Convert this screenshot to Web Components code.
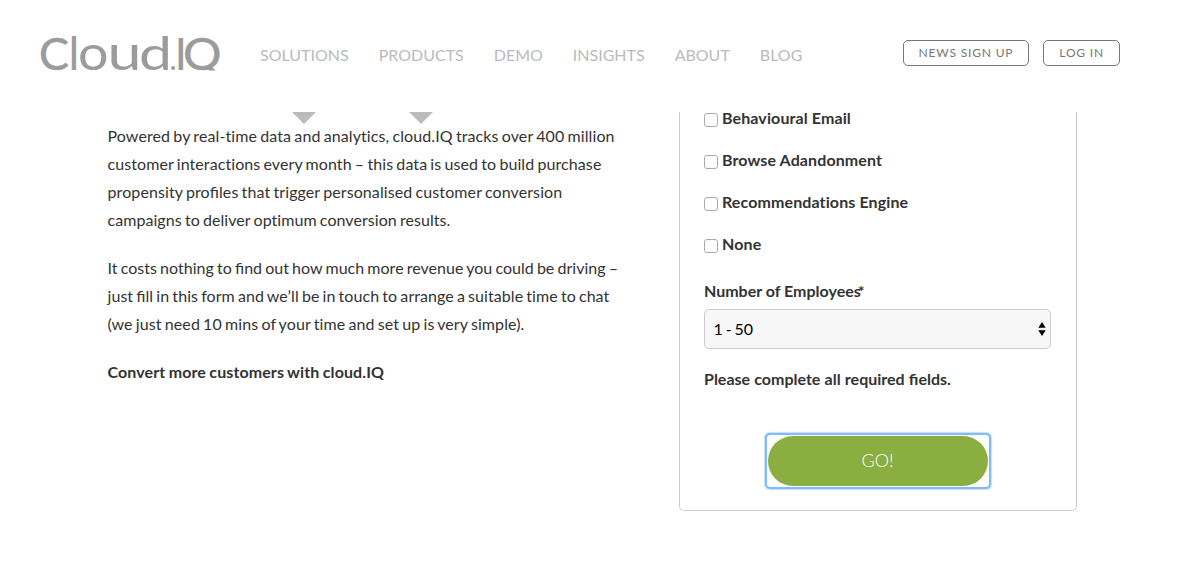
<!DOCTYPE html>
<html lang="en">
<head>
<meta charset="utf-8">
<title>cloud.IQ</title>
<style>
html,body{margin:0;height:100%;overflow:hidden;background:#fff}
body{font:16px/28px Lato,"Open Sans",sans-serif;color:#333}
</style>
</head>
<body>
<ciq-page>
  <ciq-header slot="header">
    <ciq-nav-item menu>SOLUTIONS</ciq-nav-item>
    <ciq-nav-item menu>PRODUCTS</ciq-nav-item>
    <ciq-nav-item>DEMO</ciq-nav-item>
    <ciq-nav-item>INSIGHTS</ciq-nav-item>
    <ciq-nav-item>ABOUT</ciq-nav-item>
    <ciq-nav-item>BLOG</ciq-nav-item>
    <ciq-pill slot="actions">NEWS SIGN UP</ciq-pill>
    <ciq-pill slot="actions">LOG IN</ciq-pill>
  </ciq-header>
  <ciq-copy></ciq-copy>
  <ciq-form>
    <ciq-check>Behavioural Email</ciq-check>
    <ciq-check>Browse Adandonment</ciq-check>
    <ciq-check>Recommendations Engine</ciq-check>
    <ciq-check>None</ciq-check>
    <ciq-select slot="fields" label="Number of Employees">1 - 50</ciq-select>
    <ciq-submit slot="submit">GO!</ciq-submit>
  </ciq-form>
</ciq-page>
<script>
function define(name, html) {
  customElements.define(name, class extends HTMLElement {
    constructor() {
      super();
      this.attachShadow({mode: 'open'}).innerHTML = html;
    }
    connectedCallback() {
      const label = this.shadowRoot.querySelector('[data-label]');
      if (label) label.textContent = this.getAttribute('label');
    }
  });
}

define('ciq-page', `<style>
:host{display:block;width:1200px;height:570px;overflow:hidden}
main{display:flex;align-items:flex-start;padding-left:107.5px}
</style><slot name="header"></slot><main><slot></slot></main>`);

define('ciq-logo', `<style>:host{display:block;width:182px;height:40px;flex:none}svg{display:block;overflow:visible;clip-path:inset(-10px -10px 2.5px -10px)}
text{font-family:Lato,sans-serif;fill:#9b9b9b}
.thick{stroke:#9b9b9b;stroke-width:.5px}</style>
<svg width="182" height="40" viewBox="0 0 182 40" role="img" aria-label="Cloud.IQ"><text y="36.5"><tspan class="thick"
x="-1" font-size="44" textLength="30" lengthAdjust="spacingAndGlyphs">C</tspan><tspan
x="28.6" font-size="46">l</tspan><tspan
x="38" font-size="48" textLength="30.5" lengthAdjust="spacingAndGlyphs">o</tspan><tspan
x="67.5" font-size="49" textLength="34" lengthAdjust="spacingAndGlyphs">u</tspan><tspan
x="99" font-size="47" textLength="33" lengthAdjust="spacingAndGlyphs">d</tspan><tspan
x="129.5" font-size="30">.</tspan><tspan
x="134.5" font-size="45">I</tspan><tspan class="thick"
x="143" font-size="44" textLength="38.5" lengthAdjust="spacingAndGlyphs">Q</tspan></text></svg>`);

define('ciq-header', `<style>
:host{display:flex;height:112px;box-sizing:border-box;padding:0 80px 0 40px;align-items:flex-start;background:#fff}
ciq-logo{margin-top:33px}
nav{display:flex;gap:30px;margin:41px 0 0 38px}
.actions{display:flex;gap:14px;margin:40px 0 0 auto}
</style><ciq-logo></ciq-logo><nav><slot></slot></nav><div class="actions"><slot name="actions"></slot></div>`);

define('ciq-nav-item', `<style>
:host{display:block;position:relative;color:#bbb;white-space:nowrap}
i{display:none}
:host([menu]) i{display:block;position:absolute;top:71px;left:calc(50% - 12px);border:12px solid transparent;border-top-color:#bbb;border-bottom:0}
</style><slot></slot><i></i>`);

define('ciq-pill', `<style>
:host{display:block;box-sizing:border-box;height:26px;border:1px solid #777;border-radius:5px;padding:0 15px;font-size:12px;line-height:24px;letter-spacing:.82px;color:#777;white-space:nowrap}
</style><slot></slot>`);

define('ciq-copy', `<style>
:host{display:block;width:571.5px;padding-top:10px;font-variant-ligatures:none}
p{margin:0 0 20px;word-spacing:-1px}
p>span{display:block;white-space:nowrap;letter-spacing:var(--t)}
.fi{font-variant-ligatures:normal;letter-spacing:0}
b{word-spacing:-.6px;letter-spacing:.1px}
</style>
<p><span style="--t:.1px">Powered by real-time data and analytics, cloud.IQ tracks over 400 million</span>
<span style="--t:.085px">customer interactions every month – this data is used to build purchase</span>
<span style="--t:.1px">propensity pro<i class="fi" style="font-style:normal">fi</i>les that trigger personalised customer conversion</span>
<span style="--t:.06px">campaigns to deliver optimum conversion results.</span></p>
<p><span style="--t:.027px">It costs nothing to <i class="fi" style="font-style:normal">fi</i>nd out how much more revenue you could be driving –</span>
<span style="--t:.06px">just <i class="fi" style="font-style:normal">fi</i>ll in this form and we’ll be in touch to arrange a suitable time to chat</span>
<span style="--t:.09px">(we just need 10 mins of your time and set up is very simple).</span></p>
<p><b>Convert more customers with cloud.IQ</b></p>`);

define('ciq-form', `<style>
:host{display:block;box-sizing:border-box;width:398px;height:399px;border:1px solid #ccc;border-top:0;border-radius:0 0 5px 5px;padding:0 25px 0 24px;font-weight:bold}
.checks{margin-top:-15px}
p{margin:16px 0 43px;word-spacing:.3px}
</style><div class="checks"><slot></slot></div><slot name="fields"></slot><p>Please complete all required fields.</p><slot name="submit"></slot>`);

define('ciq-check', `<style>
:host{display:flex;height:42px;line-height:42px;letter-spacing:.11px;font-variant-ligatures:none}
i{box-sizing:border-box;width:14px;height:14px;margin:16px 4px 0 0;border:1px solid #aaa;border-radius:3px;background:#fff}
</style><i></i><slot></slot>`);

define('ciq-select', `<style>
:host{display:block;padding-top:12px}
.label{display:flex}
.label span+span{margin-left:-3px}
.box{display:flex;box-sizing:border-box;height:40px;margin-top:4px;border:1px solid #ccc;border-radius:5px;background:#f7f7f7;padding:0 4px 0 8.5px;align-items:center;justify-content:space-between;color:#000;font-weight:normal;word-spacing:-1.2px}
</style><div class="label"><span data-label></span><span>*</span></div>
<div class="box"><span><slot></slot></span><svg width="8" height="14" viewBox="0 0 8 14"><path d="M4 0l3.7 5.8H.3zM4 14L.3 8.2h7.4z"/></svg></div>`);

define('ciq-submit', `<style>
:host{display:block;width:220px;margin:0 auto;outline:2px solid #7fbcf8;outline-offset:1px;border-radius:2px;box-shadow:0 0 0 1px #fff,0 0 1px 4px #c4e0fb}
:host{background:#fff}
button{display:block;width:220px;height:50px;border:0;border-radius:25px;background:#8aaf40;color:#fff;font:300 18px/49px Lato,sans-serif;padding:0 0 1px}
</style><button><slot></slot></button>`);
</script>
</body>
</html>
